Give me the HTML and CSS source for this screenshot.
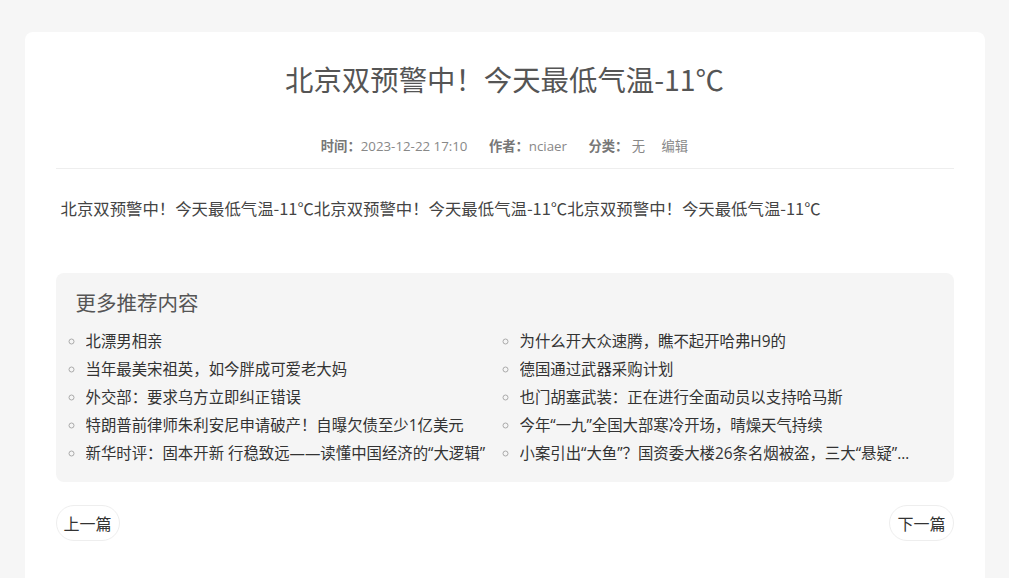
FILE: index.html
```html
<!DOCTYPE html>
<html lang="zh-CN">
<head>
<meta charset="utf-8">
<title>北京双预警中！今天最低气温-11℃</title>
<link rel="stylesheet" href="styles.css">
</head>
<body>
<div class="card">
  <h1 class="title">北京双预警中！今天最低气温-11℃</h1>
  <div class="meta">
    <span class="item"><b>时间：</b>2023-12-22 17:10</span>
    <span class="item"><b>作者：</b>nciaer</span>
    <span class="item"><b>分类：</b> 无</span>
    <span class="item edit">编辑</span>
  </div>
  <div class="content">北京双预警中！今天最低气温-11℃北京双预警中！今天最低气温-11℃北京双预警中！今天最低气温-11℃</div>
  <div class="recommend">
    <h3 class="rec-title">更多推荐内容</h3>
    <ul class="rec-list">
      <li><span>北漂男相亲</span></li>
      <li><span>为什么开大众速腾，瞧不起开哈弗H9的</span></li>
      <li><span>当年最美宋祖英，如今胖成可爱老大妈</span></li>
      <li><span>德国通过武器采购计划</span></li>
      <li><span>外交部：要求乌方立即纠正错误</span></li>
      <li><span>也门胡塞武装：正在进行全面动员以支持哈马斯</span></li>
      <li><span>特朗普前律师朱利安尼申请破产！自曝欠债至少1亿美元</span></li>
      <li><span>今年“一九”全国大部寒冷开场，晴燥天气持续</span></li>
      <li><span>新华时评：固本开新 行稳致远——读懂中国经济的“大逻辑”</span></li>
      <li><span>小案引出“大鱼”？国资委大楼26条名烟被盗，三大“悬疑”待解</span></li>
    </ul>
  </div>
  <div class="pager">
    <a class="btn">上一篇</a>
    <a class="btn">下一篇</a>
  </div>
</div>
</body>
</html>
```

FILE: styles.css
```css
html, body {
  margin: 0;
  padding: 0;
}
body {
  background: #f6f6f6;
  font-family: "Noto Sans CJK SC", "Noto Sans", sans-serif;
  color: #333;
}
.card {
  box-sizing: border-box;
  width: 960px;
  margin: 32px auto 0;
  background: #fff;
  border-radius: 8px 8px 0 0;
  padding: 27px 31px 40px;
  min-height: 560px;
}
.title {
  margin: 0;
  text-align: center;
  font-size: 28.4px;
  line-height: 40px;
  font-weight: normal;
  color: #555;
}
.meta {
  margin-top: 37px;
  text-align: center;
  font-family: "Open Sans", "Noto Sans CJK SC", sans-serif;
  font-size: 13.3px;
  line-height: 20px;
  color: #888;
  padding-bottom: 12px;
  border-bottom: 1px solid #eee;
}
.meta .item {
  margin: 0 9px;
}
.meta .item.edit {
  margin-left: 4px;
}
.meta b {
  font-family: "Noto Sans CJK SC", sans-serif;
  color: #777;
  font-weight: bold;
}
.content {
  margin-top: 27px;
  padding: 0 5px;
  font-size: 16.4px;
  line-height: 24px;
  color: #444;
}
.recommend {
  margin-top: 53px;
  background: #f5f5f5;
  border-radius: 8px;
  padding: 14px 0 14px 20px;
}
.rec-title {
  margin: 0;
  font-size: 20.5px;
  line-height: 30px;
  font-weight: normal;
  color: #555;
}
.rec-list {
  margin: 11px 0 0;
  padding: 0 0 0 10px;
  list-style: circle outside;
  display: grid;
  grid-template-columns: 1fr 1fr;
}
.rec-list li {
  min-width: 0;
  font-family: "Open Sans", "Noto Sans CJK SC", sans-serif;
  font-size: 15.4px;
  line-height: 28px;
  color: #333;
  padding-right: 30px;
}
.rec-list li::marker {
  color: #aaa;
  font-size: 14px;
}
.rec-list li span {
  display: block;
  white-space: nowrap;
  overflow: hidden;
  text-overflow: ellipsis;
}
.pager {
  margin-top: 23px;
  display: flex;
  justify-content: space-between;
}
.btn {
  display: inline-block;
  box-sizing: border-box;
  height: 36px;
  line-height: 34px;
  padding: 0 7px;
  border: 1px solid #eee;
  border-radius: 18px;
  font-size: 16px;
  color: #333;
  cursor: pointer;
}
```
